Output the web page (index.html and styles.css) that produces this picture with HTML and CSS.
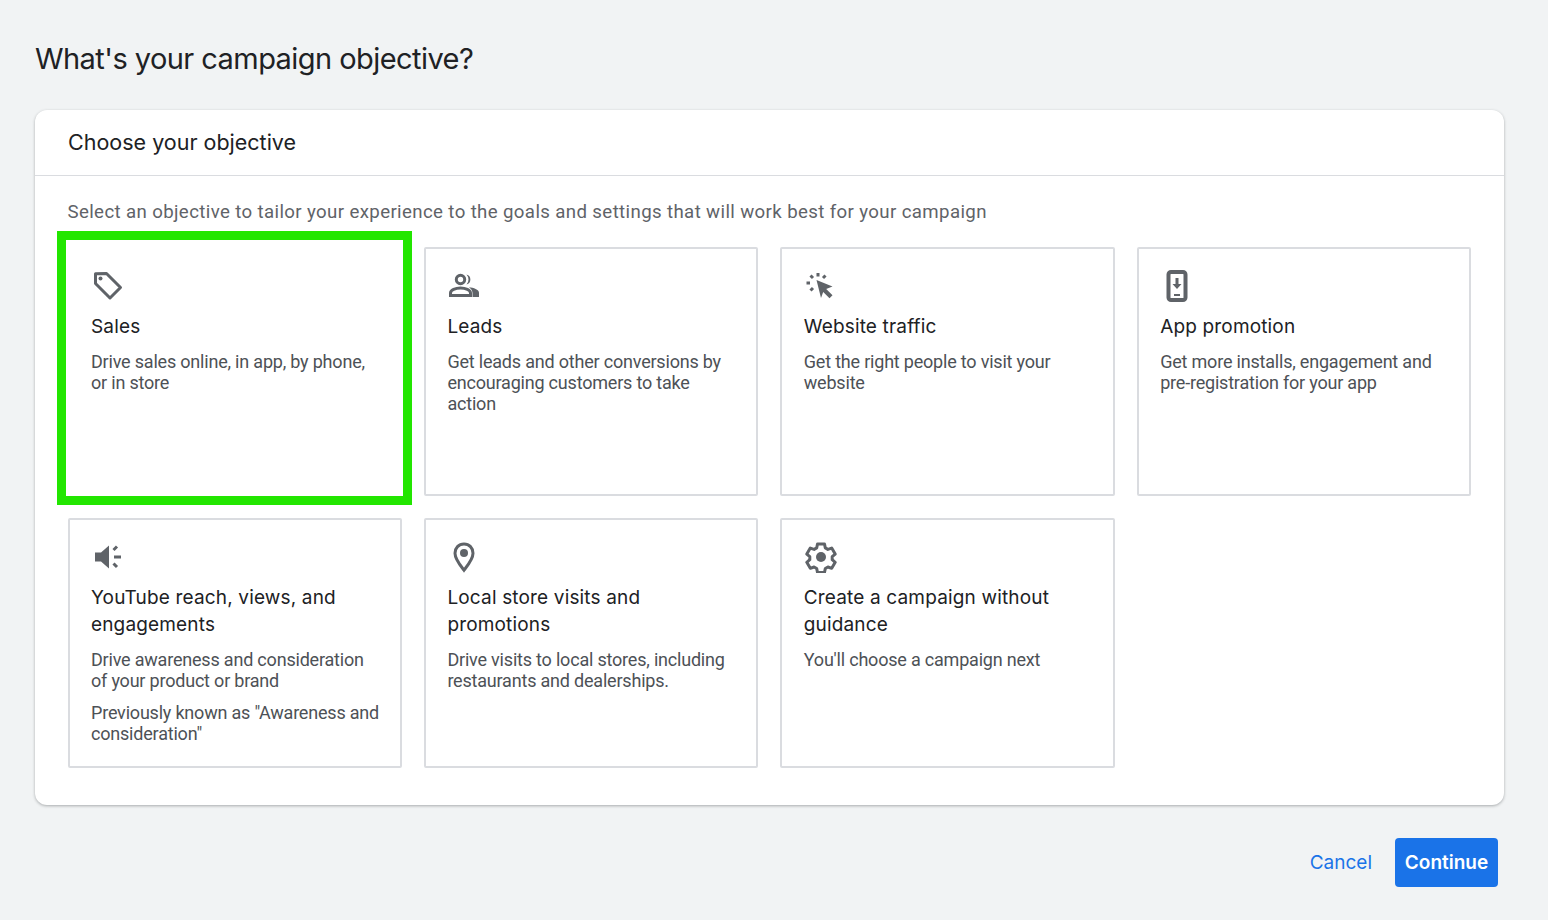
FILE: index.html
```html
<!DOCTYPE html>
<html lang="en">
<head>
    <meta charset="UTF-8">
    <meta name="viewport" content="width=device-width, initial-scale=1.0">
    <title>Campaign objective</title>
    <link rel="stylesheet" href="styles.css">
</head>
<body>
    <h1 class="page-title">What's your campaign objective?</h1>

    <div class="panel">
        <div class="panel-header">Choose your objective</div>
        <div class="panel-body">
            <p class="intro">Select an objective to tailor your experience to the goals and settings that will work best for your campaign</p>

            <div class="tiles">
                <div class="tile selected">
                    <svg class="icon" viewBox="0 0 32 32">
                        <path class="line" d="M3.500 3.800v9.700L18 28 28.500 17.500 14.500 3.500z" stroke-linejoin="round"/>
                        <circle class="fill" cx="8.500" cy="8.500" r="2"/>
                    </svg>
                    <div class="tile-title">Sales</div>
                    <p class="tile-text">Drive sales online, in app, by phone, or in store</p>
                </div>

                <div class="tile">
                    <svg class="icon" viewBox="0 0 32 32">
                        <circle class="line" cx="12.500" cy="9.500" r="4.200"/>
                        <path class="line" d="M2.500 25.500v-2.500c0-3 5-5 10-5s10 2 10 5v2.500z"/>
                        <path class="fill" d="M18.500 4.400a5.300 5.300 0 0 1 0 10.200 7.500 7.500 0 0 0 0-10.200z"/>
                        <path class="fill" d="M21 17.200c4.500.5 10 2.300 10 5.500V27h-6.500v-4c0-2.300-1.500-4.300-3.500-5.800z"/>
                    </svg>
                    <div class="tile-title">Leads</div>
                    <p class="tile-text">Get leads and other conversions by encouraging customers to take action</p>
                </div>

                <div class="tile">
                    <svg class="icon" viewBox="0 0 32 32">
                        <path class="fill" d="M11.500 10l16 6.500-6.300 2.400 6.300 6.300-3 3-6.300-6.300L16 28z"/>
                        <path class="dash" d="M13 3v3.500M5.500 5.500L8 8M20.500 5.500L18 8M1.500 13H5M5.500 20.500L8 18"/>
                    </svg>
                    <div class="tile-title">Website traffic</div>
                    <p class="tile-text">Get the right people to visit your website</p>
                </div>

                <div class="tile">
                    <svg class="icon" viewBox="0 0 32 32">
                        <rect class="line thick" x="7.500" y="2" width="17" height="28" rx="2.500"/>
                        <path class="fill" d="M14.500 8h3v6h3L16 19l-4.500-5h3z"/>
                        <rect class="fill" x="13" y="24" width="6" height="2"/>
                    </svg>
                    <div class="tile-title">App promotion</div>
                    <p class="tile-text">Get more installs, engagement and pre-registration for your app</p>
                </div>

                <div class="tile">
                    <svg class="icon" viewBox="0 0 32 32">
                        <path class="fill" d="M3 11.500h6L17 4.500v23l-8-7H3z"/>
                        <path class="dash" d="M25 5.500l-3.500 3.500M22 16h7M21.500 22.500L25 26"/>
                    </svg>
                    <div class="tile-title">YouTube reach, views, and engagements</div>
                    <p class="tile-text">Drive awareness and consideration of your product or brand</p>
                    <p class="tile-text">Previously known as "Awareness and consideration"</p>
                </div>

                <div class="tile">
                    <svg class="icon" viewBox="0 0 32 32">
                        <path class="line" d="M16 3c-5.300 0-9 4-9 9.200 0 6 5.600 12.600 9 17 3.400-4.400 9-11 9-17C25 7 21.300 3 16 3z"/>
                        <circle class="fill" cx="16" cy="12" r="4"/>
                    </svg>
                    <div class="tile-title">Local store visits and promotions</div>
                    <p class="tile-text">Drive visits to local stores, including restaurants and dealerships.</p>
                </div>

                <div class="tile">
                    <svg class="icon" viewBox="0 0 32 32">
                        <path class="line" d="M12.500 3h7l.8 3.900 2.600 1.500 3.800-1.300 3.500 6-3 2.600v3l3 2.600-3.500 6-3.800-1.300-2.600 1.500-.8 4h-7l-.8-4-2.600-1.500-3.800 1.300-3.500-6 3-2.600v-3l-3-2.600 3.500-6 3.800 1.300 2.600-1.500z" stroke-linejoin="round"/>
                        <circle class="fill" cx="16" cy="16" r="5"/>
                    </svg>
                    <div class="tile-title">Create a campaign without guidance</div>
                    <p class="tile-text">You'll choose a campaign next</p>
                </div>
            </div>
        </div>
    </div>

    <div class="actions">
        <button type="button" class="btn-cancel">Cancel</button>
        <button type="button" class="btn-continue">Continue</button>
    </div>
</body>
</html>
```

FILE: styles.css
```css
body {
    font-family: Roboto, Arial, sans-serif;
    margin: 0;
    padding: 0 50px 33px 35px;
    background-color: #f1f3f4;
    color: #202124;
}

.page-title {
    margin: 0;
    padding-top: 40px;
    height: 110px;
    box-sizing: border-box;
    font-family: Inter, "Open Sans", sans-serif;
    font-size: 29px;
    line-height: 38px;
    font-weight: 400;
    letter-spacing: -0.56px;
}

.panel {
    width: 1469px;
    height: 695px;
    box-sizing: border-box;
    background-color: white;
    border-radius: 12px;
    box-shadow: 0 1px 3px rgba(60, 64, 67, 0.4);
}

.panel-header {
    height: 66px;
    box-sizing: border-box;
    padding: 17.500px 33px 0;
    border-bottom: 1px solid #dadce0;
    font-family: Inter, "Open Sans", sans-serif;
    font-size: 21.500px;
    line-height: 28px;
}

.panel-body {
    padding: 25px 32.500px 0;
}

.intro {
    margin: 0 0 22.500px;
    font-size: 18.670px;
    line-height: 23px;
    color: #5f6368;
    letter-spacing: 0.37px;
}

.tiles {
    display: grid;
    grid-template-columns: repeat(4, 334.400px);
    grid-auto-rows: 249.500px;
    column-gap: 22px;
    row-gap: 22px;
}

.tile {
    position: relative;
    box-sizing: border-box;
    padding: 21px 18px 0 21.500px;
    border: 2px solid #dadce0;
    border-radius: 2px;
}

.tile.selected {
    border-color: transparent;
}

.tile.selected::after {
    content: "";
    position: absolute;
    left: -12.500px;
    right: -12px;
    top: -18px;
    bottom: -11px;
    border: 9px solid #22e600;
}

.icon {
    display: block;
    width: 32px;
    height: 32px;
    margin: 0 0 11px 1px;
}

.line {
    fill: none;
    stroke: #5f6368;
    stroke-width: 3;
}

.line.thick {
    stroke-width: 4;
}

.fill {
    fill: #5f6368;
}

.dash {
    fill: none;
    stroke: #5f6368;
    stroke-width: 3;
}

.tile-title {
    font-family: Inter, "Open Sans", sans-serif;
    font-size: 19px;
    letter-spacing: 0.16px;
    line-height: 27px;
    margin-bottom: 11px;
}

.tile-text {
    margin: 0 0 11px;
    font-size: 18px;
    line-height: 21px;
    color: #4d5156;
    letter-spacing: -0.2px;
}

.actions {
    display: flex;
    justify-content: flex-end;
    align-items: center;
    gap: 23px;
    margin-top: 33px;
}

button {
    border: none;
    cursor: pointer;
    font-family: Inter, "Open Sans", sans-serif;
    font-size: 19px;
    padding: 0;
    background: none;
}

.btn-cancel {
    color: #1a73e8;
}

.btn-continue {
    width: 103px;
    height: 49px;
    background-color: #1a73e8;
    color: white;
    border-radius: 4px;
    font-weight: 600;
}
```
